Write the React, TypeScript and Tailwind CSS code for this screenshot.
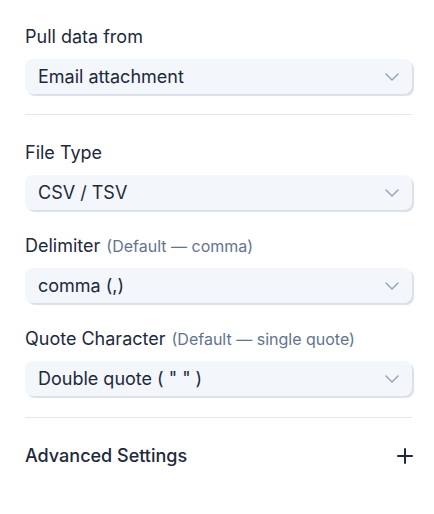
import React from 'react';
import { ChevronDown, Plus } from 'lucide-react';

type FieldProps = { label: string; hint?: string; value: string };

const SelectField: React.FC<FieldProps> = ({ label, hint, value }) => (
  <div>
    <p className="h-6 text-[18px] leading-6 text-slate-800">
      {label}
      {hint && <span className="ml-1.5 text-[16px] text-slate-500">{hint}</span>}
    </p>
    <div className="mt-[10px] flex h-[35px] items-center justify-between rounded-lg bg-[#f3f6fa] pl-[13px] pr-2 text-[18px] text-slate-800 shadow-[2px_2px_1px_#dbe0e8]">
      <span>{value}</span>
      <ChevronDown className="h-6 w-6 text-slate-400" strokeWidth={1.4} />
    </div>
  </div>
);

export default function App() {
  return (
    <div className="min-h-[514px] bg-white pl-[25px] pr-[22px] pt-[25px]" style={{ fontFamily: 'Inter, "Noto Sans", sans-serif' }}>
      <SelectField label="Pull data from" value="Email attachment" />

      <div className="mt-5 h-px bg-slate-200" />

      <div className="mt-[26px] flex flex-col gap-6">
        <SelectField label="File Type" value="CSV / TSV" />
        <SelectField label="Delimiter" hint="(Default — comma)" value="comma (,)" />
        <SelectField label="Quote Character" hint="(Default — single quote)" value={'Double quote ( " " )'} />
      </div>

      <div className="mt-[21px] h-px bg-slate-200" />

      <button type="button" className="mt-[26px] flex w-full items-center justify-between text-left">
        <span className="text-[18px] leading-6 font-medium text-slate-800">Advanced Settings</span>
        <Plus className="mr-[-5px] h-6 w-6 text-slate-800" strokeWidth={2} />
      </button>
    </div>
  );
}
